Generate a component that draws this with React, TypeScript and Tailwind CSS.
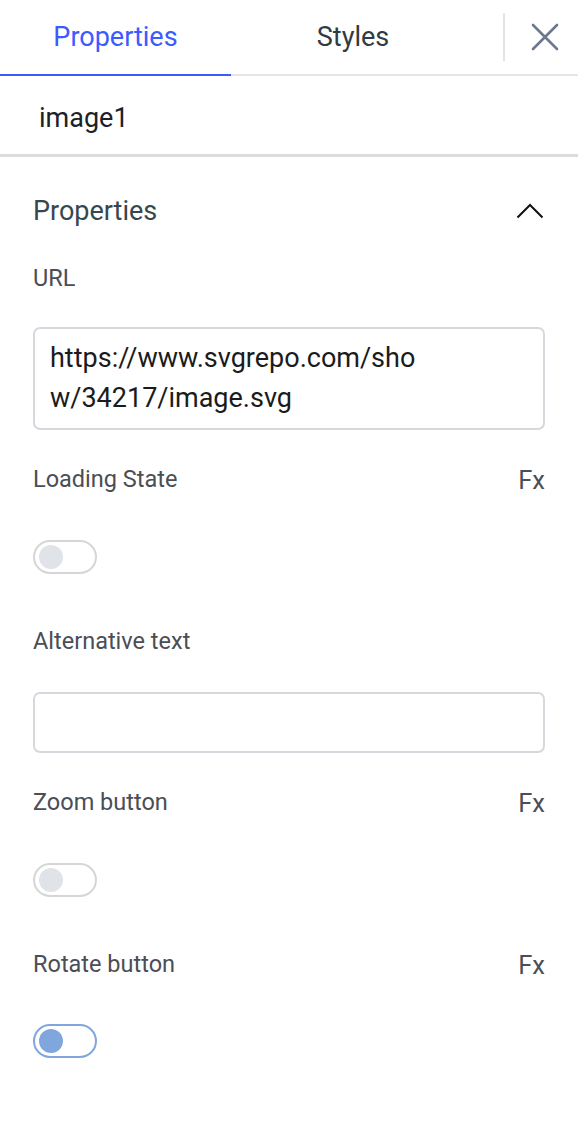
import { useState } from 'react';

function Toggle({ on }: { on?: boolean }) {
  return (
    <div
      className={`flex items-center w-[64px] h-[34px] rounded-full border-2 px-[4px] ${
        on ? 'border-[#80a7dd]' : 'border-[#d6d6d6]'
      }`}
    >
      <div className={`w-[24px] h-[24px] rounded-full ${on ? 'bg-[#80a7dd]' : 'bg-[#e0e3e7]'}`} />
    </div>
  );
}

function FieldLabel({ label, fx }: { label: string; fx?: boolean }) {
  return (
    <div className="flex items-center justify-between h-[40px]">
      <span className="text-[23.5px] text-[#4a4e55]">{label}</span>
      {fx && <span className="text-[25.5px] text-[#4a4e55]">Fx</span>}
    </div>
  );
}

export default function App() {
  const [tab, setTab] = useState<'props' | 'styles'>('props');

  return (
    <div className="w-[578px] min-h-[1134px] bg-white" style={{ fontFamily: 'Roboto, "Liberation Sans", sans-serif' }}>
      {/* tab bar */}
      <div className="flex h-[76px] border-b-2 border-[#e4e6ea]">
        <button
          onClick={() => setTab('props')}
          className={`w-[231px] -mb-[2px] flex items-center justify-center text-[27px] border-b-2 ${
            tab === 'props' ? 'text-[#3d5afe] border-[#3d5afe]' : 'text-[#2f3c44] border-transparent'
          }`}
        >
          Properties
        </button>
        <button
          onClick={() => setTab('styles')}
          className={`w-[244px] -mb-[2px] flex items-center justify-center text-[27px] border-b-2 ${
            tab === 'styles' ? 'text-[#3d5afe] border-[#3d5afe]' : 'text-[#2f3c44] border-transparent'
          }`}
        >
          Styles
        </button>
        <div className="flex-1 flex items-center">
          <div className="w-[2px] h-[48px] bg-[#e2e4e8] ml-[28px]" />
          <button className="ml-[26px] text-[#6b7890]">
            <svg width="28" height="28" viewBox="0 0 28 28" fill="none" stroke="currentColor" strokeWidth="2.6" strokeLinecap="round">
              <path d="M2 2L26 26M26 2L2 26" />
            </svg>
          </button>
        </div>
      </div>

      {/* component name */}
      <div className="h-[81px] flex items-center pl-[39px] pt-[6px] text-[27px] text-[#1c2128] border-b-[3px] border-[#dcdcdc]">
        image1
      </div>

      {/* properties section */}
      <div className="px-[33px] pb-[40px] flex flex-col">
        <div className="flex items-center justify-between h-[40px] mt-[34px]">
          <span className="text-[27px] text-[#36474f]">Properties</span>
          <svg width="28" height="16" viewBox="0 0 28 16" fill="none" stroke="#111" strokeWidth="2" className="mr-[1px]">
            <path d="M1.5 14.5L14 2L26.5 14.5" />
          </svg>
        </div>

        <div className="mt-[28px]">
          <FieldLabel label="URL" />
        </div>
        <div className="mt-[28px] h-[103px] rounded-[7px] border-2 border-[#d5d8dc] px-[15px] pt-[9px]">
          <div className="w-[385px] break-all text-[27px] leading-[40px] text-[#1b1b1b]">
            https://www.svgrepo.com/show/34217/image.svg
          </div>
        </div>

        <div className="mt-[30px]">
          <FieldLabel label="Loading State" fx />
        </div>
        <div className="mt-[40px]">
          <Toggle />
        </div>

        <div className="mt-[48px]">
          <FieldLabel label="Alternative text" />
        </div>
        <div className="mt-[30px] h-[61px] rounded-[7px] border-2 border-[#d5d8dc]" />

        <div className="mt-[30px]">
          <FieldLabel label="Zoom button" fx />
        </div>
        <div className="mt-[40px]">
          <Toggle />
        </div>

        <div className="mt-[48px]">
          <FieldLabel label="Rotate button" fx />
        </div>
        <div className="mt-[39px]">
          <Toggle on />
        </div>
      </div>
    </div>
  );
}
